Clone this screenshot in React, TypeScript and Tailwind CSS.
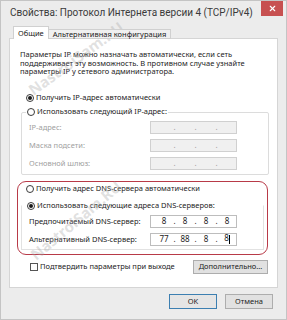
import { X } from "lucide-react";

function Radio({ checked }: { checked?: boolean }) {
    return (
        <span className="w-[8px] h-[8px] rounded-full border border-[#3a3a3a] bg-white flex items-center justify-center shrink-0">
            {checked && <span className="w-[4px] h-[4px] rounded-full bg-[#1a1a1a]" />}
        </span>
    );
}

function IpField({ parts, disabled, cursor }: { parts: string[]; disabled?: boolean; cursor?: boolean }) {
    return (
        <div
            className={
                "w-[87px] h-[13px] border flex items-center pl-[5px] text-[8px] " +
                (disabled ? "border-[#d0d0d0] bg-[#f0f0f0] text-[#9a9a9a]" : "border-[#bdbdbd] bg-white text-[#222]")
            }
        >
            {parts.map((p, i) => (
                <div key={i} className="flex items-center">
                    {i > 0 && <span className="w-[5px] text-center">.</span>}
                    <span className="w-[16px] text-center">
                        {p}
                        {cursor && i === 3 && <span className="inline-block w-px h-[9px] bg-black align-middle" />}
                    </span>
                </div>
            ))}
        </div>
    );
}

function Row({ label, children, disabled }: { label: string; children: React.ReactNode; disabled?: boolean }) {
    return (
        <div className="flex items-center h-[13px]">
            <span className={"w-[121px] whitespace-nowrap " + (disabled ? "text-[#a0a0a0]" : "text-[#222]")}>{label}</span>
            {children}
        </div>
    );
}

export default function App() {
    const empty = ["", "", "", ""];
    return (
        <div
            className="w-[287px] h-[320px] bg-[#ececec] border border-[#c4c4c4] relative overflow-hidden text-[7.5px] leading-[8.5px] text-[#222]"
            style={{ fontFamily: '"Noto Sans", "Open Sans", sans-serif' }}
        >
            {/* title bar */}
            <div className="flex items-start justify-between h-[25px]">
                <div
                    className="pl-[9px] pt-[5px] text-[10px] leading-[14px] text-[#3a3a3a] whitespace-nowrap"
                    style={{ fontFamily: 'Roboto, "Noto Sans", sans-serif' }}
                >
                    Свойства: Протокол Интернета версии 4 (TCP/IPv4)
                </div>
                <div className="w-[22px] h-[15px] mr-[3px] shrink-0 bg-[#c75050] flex items-center justify-center">
                    <X size={9} strokeWidth={3} color="#ffffff" />
                </div>
            </div>

            {/* tabs */}
            <div className="flex items-end ml-[12px] h-[13px] relative z-10">
                <div className="h-[13px] px-[4px] border border-b-0 border-[#d0d0d0] bg-white flex items-center">Общие</div>
                <div className="h-[10px] px-[4px] border border-l-0 border-[#d0d0d0] bg-[#f0f0f0] flex items-center">
                    Альтернативная конфигурация
                </div>
            </div>

            {/* panel */}
            <div className="mx-[8px] -mt-px h-[250px] border border-[#d5d5d5] bg-white flex flex-col">
                <p className="pt-[11px] px-[10px]">
                    Параметры IP можно назначать автоматически, если сеть поддерживает эту возможность. В противном случае
                    узнайте параметры IP у сетевого администратора.
                </p>

                <div className="flex items-center gap-[2px] h-[12px] ml-[16px] mt-[16px]">
                    <Radio checked />
                    <span>Получить IP-адрес автоматически</span>
                </div>

                <div className="relative mt-[8px] ml-[11px] mr-[8px] border border-[#dcdcdc] rounded-[2px] pt-[8px] pb-[4px] pl-[7px] flex flex-col gap-[5px]">
                    <div className="absolute -top-[7px] left-[4px] h-[12px] px-[1px] bg-white flex items-center gap-[2px]">
                        <Radio />
                        <span>Использовать следующий IP-адрес:</span>
                    </div>
                    <Row label="IP-адрес:" disabled>
                        <IpField parts={empty} disabled />
                    </Row>
                    <Row label="Маска подсети:" disabled>
                        <IpField parts={empty} disabled />
                    </Row>
                    <Row label="Основной шлюз:" disabled>
                        <IpField parts={empty} disabled />
                    </Row>
                </div>

                {/* highlighted DNS block */}
                <div className="mt-[6px] ml-[7px] mr-[9px] h-[74px] border-[1.5px] border-[#b83a48] rounded-[9px] flex flex-col pt-[1px]">
                    <div className="flex items-center gap-[2px] h-[12px] ml-[8px]">
                        <Radio />
                        <span>Получить адрес DNS-сервера автоматически</span>
                    </div>
                    <div className="relative mt-[10px] ml-[3px] mr-[3px] border border-[#e2e2e2] border-t-transparent pt-[9px] pb-[3px] pl-[7px] flex flex-col gap-[5px]">
                        <div className="absolute -top-[6px] left-[4px] h-[12px] px-[1px] bg-white flex items-center gap-[2px]">
                            <Radio checked />
                            <span>Использовать следующие адреса DNS-серверов:</span>
                        </div>
                        <Row label="Предпочитаемый DNS-сервер:">
                            <IpField parts={["8", "8", "8", "8"]} />
                        </Row>
                        <Row label="Альтернативный DNS-сервер:">
                            <IpField parts={["77", "88", "8", "8"]} cursor />
                        </Row>
                    </div>
                </div>

                <div className="mt-[5px] ml-[20px] mr-[9px] h-[14px] flex items-center justify-between">
                    <div className="flex items-center gap-[2px]">
                        <span className="w-[8px] h-[8px] border border-[#555] bg-white" />
                        <span>Подтвердить параметры при выходе</span>
                    </div>
                    <div className="w-[75px] h-[14px] border border-[#adadad] bg-[#e1e1e1] flex items-center justify-center">
                        Дополнительно...
                    </div>
                </div>
            </div>

            {/* dialog buttons */}
            <div className="flex justify-end gap-[8px] mt-[6px] mr-[13px]">
                <div className="w-[48px] h-[15px] border border-[#3c7fb1] bg-[#e5e5e5] flex items-center justify-center">OK</div>
                <div className="w-[48px] h-[15px] border border-[#adadad] bg-[#e1e1e1] flex items-center justify-center">Отмена</div>
            </div>

            {/* watermark */}
            <div className="absolute left-[5px] top-[50px] w-[140px] text-center text-[15px] leading-[15px] font-bold text-[#a8a8a8]/35 rotate-[-36deg] pointer-events-none">
                NastroiSam.RU
            </div>
            <div className="absolute left-[5px] top-[212px] w-[140px] text-center text-[15px] leading-[15px] font-bold text-[#a8a8a8]/35 rotate-[-40deg] pointer-events-none">
                NastroiSam.RU
            </div>
        </div>
    );
}
